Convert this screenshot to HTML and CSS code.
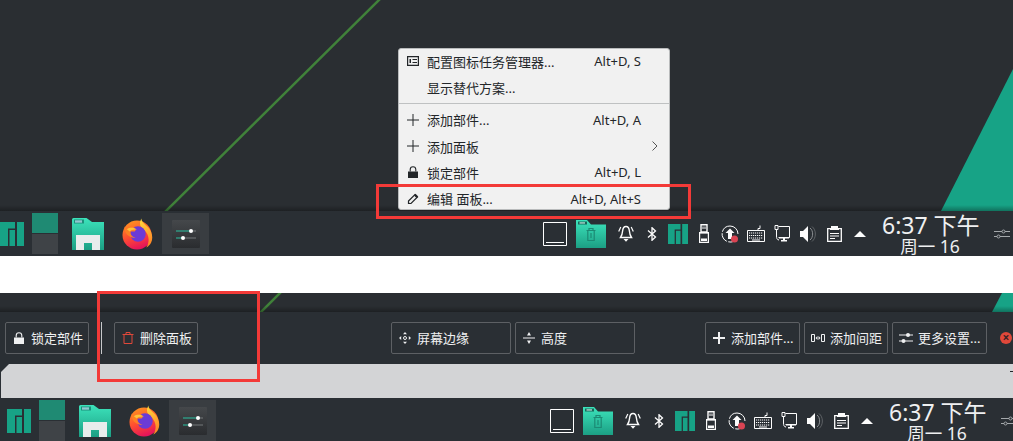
FILE: index.html
```html
<!DOCTYPE html>
<html lang="zh-CN">
<head>
<meta charset="utf-8">
<title>编辑面板</title>
<link rel="stylesheet" href="styles.css">
</head>
<body>
<svg class="sprites" aria-hidden="true">
  <defs>
    <linearGradient id="g-folder" x1="0" y1="0" x2="0" y2="1"><stop offset="0" stop-color="#3ce3bb"/><stop offset="1" stop-color="#1c9f84"/></linearGradient>
    <linearGradient id="g-fox" x1="0.1" y1="0" x2="0.45" y2="1"><stop offset="0" stop-color="#ff9a1f"/><stop offset=".55" stop-color="#ff4f30"/><stop offset="1" stop-color="#e6145a"/></linearGradient>
    <linearGradient id="g-flame" x1="0.2" y1="0" x2="0.5" y2="1"><stop offset="0" stop-color="#ffd83c"/><stop offset="1" stop-color="#ff8424"/></linearGradient>
    <linearGradient id="g-tile" x1="0" y1="0" x2="0" y2="1"><stop offset="0" stop-color="#45484b"/><stop offset="1" stop-color="#2a2c2f"/></linearGradient>
    <symbol id="i-manjaro" viewBox="0 0 24 24"><path d="M0 0H15V6.500H8V24H0Z M9.500 8H15V24H9.500Z M17 0H24V24H17Z"/></symbol>
    <symbol id="i-folder" viewBox="0 0 32 32">
      <path fill="url(#g-folder)" d="M0 1.500Q0 0 1.500 0H14.500L20 4H32V32H0Z"/>
      <path fill="#1d8f7b" d="M2 1.500H12V5.500H2Z"/>
      <path fill="#8fc8d0" d="M3 2.300H10V4.700H3Z"/>
      <path fill="#e9ecec" d="M4 17H28V32H20V25H12V32H4Z"/>
    </symbol>
    <symbol id="i-trashfolder" viewBox="0 0 30 28">
      <path fill="url(#g-folder)" d="M0 0H11L15 4.500H30V28H0Z"/>
      <path fill="#17695a" d="M2 1.500H11V4.500H2Z"/><path fill="#d5f3ec" d="M3.500 2.400H9V3.500H3.500Z"/>
      <path fill="none" stroke="#1c8a74" stroke-width="1.200" d="M10.500 10.500H19.500M13 10.500V8.500H17V10.500M11.800 10.500V20.500H18.200V10.500M15 13V18"/>
    </symbol>
    <symbol id="i-firefox" viewBox="0 0 32 32">
      <circle cx="15.500" cy="17" r="15" fill="url(#g-fox)"/>
      <path fill="url(#g-flame)" d="M20 0C20 4 24 6 27 9C31 13 32.500 20 30 25C29 27 27 29 25 30C29 24 28 16 23 12C19 9 17 6 20 0Z"/>
      <circle cx="16.500" cy="16" r="8" fill="#6b3bd6"/>
      <path fill="#ff7f24" d="M2 5C2 8 3 10 5 11C7 9 10 8 12 9C14 10 15 12 13 13.500H8.500C8.500 16 10 19 14 20C8 20 3.500 16 3 12Z"/>
      <path fill="#ffc23a" d="M5 11C8 9 12 9 15.500 11.500C12 11 9 12 8 13.500Z"/>
    </symbol>
    <symbol id="i-sliders-app" viewBox="0 0 28 28">
      <rect width="28" height="28" rx="1" fill="url(#g-tile)"/>
      <path stroke="#2bbf9f" stroke-width="1.200" d="M4 11H19M4 18H11"/>
      <path stroke="#75787b" stroke-width="1.200" d="M19 11H24M11 18H24"/>
      <circle cx="19" cy="11" r="2" fill="#fff"/><circle cx="11" cy="18" r="2" fill="#fff"/>
    </symbol>
    <symbol id="i-desktop" viewBox="0 0 24 24"><path fill="none" stroke="currentColor" d="M.500.500H23.500V23.500H.500Z"/><path stroke="currentColor" d="M3 20.500H21"/></symbol>
    <symbol id="i-bell" viewBox="0 0 16 17">
      <path fill="none" stroke="currentColor" stroke-width="1.400" d="M8 1.500C5.500 1.500 4.800 3.500 4.600 6C4.400 9 3.500 11 2.500 12.500H13.500C12.500 11 11.600 9 11.400 6C11.200 3.500 10.500 1.500 8 1.500Z"/>
      <path fill="currentColor" d="M5.500 14H10.500L8 16.800Z"/>
      <path fill="none" stroke="currentColor" stroke-width="1.200" d="M2.800 2L.7 6.500M13.200 2L15.300 6.500"/>
    </symbol>
    <symbol id="i-bt" viewBox="0 0 10 14"><path fill="none" stroke="currentColor" stroke-width="1.300" d="M1 3.500L8.500 10L5 13.300V.700L8.500 4L1 10.500"/></symbol>
    <symbol id="i-usb" viewBox="0 0 10 19">
      <path fill="none" stroke="currentColor" stroke-width="1.400" d="M2 .700H8V8H2Z"/>
      <path fill="currentColor" d="M3.500 2.500H4.500V5H3.500ZM5.500 2.500H6.500V5H5.500ZM1 8H9V9.500H1Z"/>
      <path fill="none" stroke="currentColor" stroke-width="1.200" d="M.600 8.600H9.400V18.400H.600Z"/>
      <path fill="currentColor" d="M2 14.500H8V17H2Z"/>
    </symbol>
    <symbol id="i-update" viewBox="0 0 18 18">
      <path fill="none" stroke="currentColor" stroke-dasharray="10 1.500" d="M9 1A8 8 0 1 0 16 13"/>
      <path fill="none" stroke="currentColor" d="M9 1A8 8 0 0 1 17 9"/>
      <path fill="currentColor" d="M9 3.500L13.500 8H11V14H7V8H4.500Z"/>
      <circle cx="13.500" cy="14" r="3.500" fill="#da4453"/>
    </symbol>
    <symbol id="i-keyboard" viewBox="0 0 18 17">
      <path fill="none" stroke="currentColor" d="M.500 5.500H17.500V16.500H.500Z M11 5.500V3.500H13V.500"/>
      <path stroke="currentColor" stroke-dasharray="1.200 .8" d="M2 8H16M2 10.500H16M2 13H16"/>
      <path stroke="currentColor" d="M5 15H13"/>
    </symbol>
    <symbol id="i-network" viewBox="0 0 16 17">
      <path fill="none" stroke="currentColor" d="M1 .500H4V4.500H1Z M4.500 1.500H15.500V12.500H4.500 M2.500 4.500V11C2.500 13 3 15 5 15"/>
      <path fill="currentColor" d="M5 12H15V13.500H5ZM7 15H13V16.500H7ZM9 13H11V15H9Z"/>
    </symbol>
    <symbol id="i-speaker" viewBox="0 0 16 16">
      <path fill="currentColor" d="M0 5H3L8 0V16L3 11H0Z"/>
      <path fill="none" stroke="#8a8e91" d="M10 2C13.500 4.500 13.500 11.500 10 14"/>
      <path fill="none" stroke="#5e6265" d="M12 .5C16.500 4 16.500 12 12 15.500"/>
    </symbol>
    <symbol id="i-clipboard" viewBox="0 0 15 16">
      <path fill="none" stroke="currentColor" stroke-width="1.300" d="M.700 2.600H14.300V15.300H.700Z"/>
      <path fill="currentColor" d="M4 0H11V4H4ZM3 2H12V4H3Z"/>
      <path stroke="currentColor" d="M3 7.500H12M3 10H12M3 12.500H8"/>
    </symbol>
    <symbol id="i-up" viewBox="0 0 12 6"><path fill="currentColor" d="M6 0L12 6H0Z"/></symbol>
    <symbol id="i-sliders" viewBox="0 0 16 12">
      <path fill="none" stroke="currentColor" d="M0 3.500H8M11 3.500H16M0 8.500H3M6 8.500H16"/>
      <circle cx="9.500" cy="3.500" r="1.500" fill="none" stroke="currentColor"/><circle cx="4.500" cy="8.500" r="1.500" fill="none" stroke="currentColor"/>
    </symbol>
    <symbol id="i-sliders-solid" viewBox="0 0 14 12">
      <path stroke="currentColor" d="M0 3H14M0 9H14"/>
      <circle cx="9" cy="3" r="2" fill="currentColor"/><circle cx="4.500" cy="9" r="2" fill="currentColor"/>
    </symbol>
    <symbol id="i-lock" viewBox="0 0 10 12"><path fill="currentColor" d="M0 5.500H10V12H0Z"/><path fill="none" stroke="currentColor" stroke-width="1.100" d="M2.200 5.500V3.500A2.800 2.800 0 0 1 7.800 3.500V5.500"/></symbol>
    <symbol id="i-trash" viewBox="0 0 12 12"><path fill="none" stroke="currentColor" d="M.500 2.500H11.500M4 2.500V.500H8V2.500M2 2.500V11.500H10V2.500"/></symbol>
    <symbol id="i-edges" viewBox="0 0 12 12">
      <path fill="currentColor" d="M6 0L8 2.200H4ZM6 12L4 9.800H8ZM0 6L2.200 4V8ZM12 6L9.800 8V4Z"/>
      <circle cx="6" cy="6" r="1.500" fill="none" stroke="currentColor"/>
    </symbol>
    <symbol id="i-height" viewBox="0 0 12 12"><path fill="currentColor" d="M0 5.500H12V6.500H0ZM6 0L8 3.500H4ZM6 12L4 8.500H8Z"/></symbol>
    <symbol id="i-plus" viewBox="0 0 12 12"><path fill="currentColor" d="M5 0H7V5H12V7H7V12H5V7H0V5H5Z"/></symbol>
    <symbol id="i-spacer" viewBox="0 0 14 8"><path fill="none" stroke="currentColor" d="M.500.500H3.500V7.500H.500ZM10.500.500H13.500V7.500H10.500Z"/><path fill="currentColor" d="M4.500 4L6.500 2V6ZM9.500 4L7.500 6V2Z"/></symbol>
    <symbol id="i-plus-thin" viewBox="0 0 12 12"><path stroke="currentColor" d="M6 0V12M0 6H12"/></symbol>
    <symbol id="i-configure" viewBox="0 0 12 10"><path fill="none" stroke="currentColor" stroke-width="1.200" d="M.600.600H11.400V9.400H.600Z"/><path fill="currentColor" d="M2.500 3H4V7H2.500ZM5.500 3H10V4H5.500ZM5.500 6H10V7H5.500Z"/></symbol>
    <symbol id="i-pencil" viewBox="0 0 12 12"><path fill="none" stroke="currentColor" stroke-width="1.200" d="M1.500 8L8 1.500L10.500 4L4 10.500H1.500Z"/><path fill="currentColor" d="M7 2.500L8.500 .800L11.200 3.500L9.500 5ZM1 11V8.500L3.500 11Z"/></symbol>
    <symbol id="i-chevron" viewBox="0 0 6 10"><path fill="none" stroke="currentColor" d="M.500.500L5 5L.500 9.500"/></symbol>
  </defs>
</svg>

<section class="screen screen--first">
  <div class="desktop desktop--tall">
    <svg class="wallpaper" viewBox="0 0 1013 211" aria-hidden="true">
      <path d="M381 -2L164 213" stroke="#40823a" stroke-width="2.500" fill="none"/>
      <path d="M941 211L1013 69V211Z" fill="#17a386"/>
    </svg>
  </div>
  <div class="panel panel--tall">
    <div class="panel-inner">
      <svg class="launcher"><use href="#i-manjaro"/></svg>
      <div class="pager"><span class="pager-cell pager-cell--on"></span><span class="pager-cell"></span></div>
      <svg class="app app--folder"><use href="#i-folder"/></svg>
      <svg class="app app--firefox"><use href="#i-firefox"/></svg>
      <div class="task"><svg class="task-icon"><use href="#i-sliders-app"/></svg></div>
      <div class="tray">
        <svg class="show-desktop"><use href="#i-desktop"/></svg>
        <svg class="trash-folder"><use href="#i-trashfolder"/></svg>
        <span class="slot"><svg class="t t-bell"><use href="#i-bell"/></svg></span>
        <span class="slot"><svg class="t t-bt"><use href="#i-bt"/></svg></span>
        <span class="slot"><svg class="t t-manjaro"><use href="#i-manjaro"/></svg></span>
        <span class="slot"><svg class="t t-usb"><use href="#i-usb"/></svg></span>
        <span class="slot"><svg class="t t-update"><use href="#i-update"/></svg></span>
        <span class="slot"><svg class="t t-keyboard"><use href="#i-keyboard"/></svg></span>
        <span class="slot"><svg class="t t-network"><use href="#i-network"/></svg></span>
        <span class="slot"><svg class="t t-speaker"><use href="#i-speaker"/></svg></span>
        <span class="slot"><svg class="t t-clipboard"><use href="#i-clipboard"/></svg></span>
        <span class="slot"><svg class="t t-up"><use href="#i-up"/></svg></span>
        <div class="clock"><div class="clock-time">6:37 下午</div><div class="clock-date">周一 16</div></div>
        <svg class="panel-settings"><use href="#i-sliders"/></svg>
      </div>
    </div>
  </div>
</section>

<section class="screen screen--second">
  <div class="desktop desktop--strip">
    <svg class="wallpaper" viewBox="0 0 1013 19" aria-hidden="true">
      <path d="M281 -1L260 20" stroke="#40823a" stroke-width="2.500" fill="none"/>
      <path d="M992 19L1002 0H1013V19Z" fill="#17a386"/>
    </svg>
  </div>
  <div class="toolbar">
    <button class="btn btn--narrow"><svg class="btn-icon btn-icon--lock"><use href="#i-lock"/></svg>锁定部件</button>
    <span class="toolbar-sep"></span>
    <button class="btn btn--narrow"><svg class="btn-icon btn-icon--trash"><use href="#i-trash"/></svg>删除面板</button>
    <div class="btn-group btn-group--center">
      <button class="btn btn--wide"><svg class="btn-icon btn-icon--small"><use href="#i-edges"/></svg>屏幕边缘</button>
      <button class="btn btn--wide"><svg class="btn-icon btn-icon--small"><use href="#i-height"/></svg>高度</button>
    </div>
    <div class="btn-group btn-group--right">
      <button class="btn btn--mid"><svg class="btn-icon btn-icon--small"><use href="#i-plus"/></svg>添加部件...</button>
      <button class="btn btn--narrow"><svg class="btn-icon btn-icon--spacer"><use href="#i-spacer"/></svg>添加间距</button>
      <button class="btn btn--mid"><svg class="btn-icon btn-icon--sliders"><use href="#i-sliders-solid"/></svg>更多设置...</button>
    </div>
    <span class="close-btn">×</span>
  </div>
  <div class="ruler"><span class="ruler-tick"></span></div>
  <div class="panel panel--short">
    <div class="panel-inner">
      <svg class="launcher"><use href="#i-manjaro"/></svg>
      <div class="pager"><span class="pager-cell pager-cell--on"></span><span class="pager-cell"></span></div>
      <svg class="app app--folder"><use href="#i-folder"/></svg>
      <svg class="app app--firefox"><use href="#i-firefox"/></svg>
      <div class="task"><svg class="task-icon"><use href="#i-sliders-app"/></svg></div>
      <div class="tray">
        <svg class="show-desktop"><use href="#i-desktop"/></svg>
        <svg class="trash-folder"><use href="#i-trashfolder"/></svg>
        <span class="slot"><svg class="t t-bell"><use href="#i-bell"/></svg></span>
        <span class="slot"><svg class="t t-bt"><use href="#i-bt"/></svg></span>
        <span class="slot"><svg class="t t-manjaro"><use href="#i-manjaro"/></svg></span>
        <span class="slot"><svg class="t t-usb"><use href="#i-usb"/></svg></span>
        <span class="slot"><svg class="t t-update"><use href="#i-update"/></svg></span>
        <span class="slot"><svg class="t t-keyboard"><use href="#i-keyboard"/></svg></span>
        <span class="slot"><svg class="t t-network"><use href="#i-network"/></svg></span>
        <span class="slot"><svg class="t t-speaker"><use href="#i-speaker"/></svg></span>
        <span class="slot"><svg class="t t-clipboard"><use href="#i-clipboard"/></svg></span>
        <span class="slot"><svg class="t t-up"><use href="#i-up"/></svg></span>
        <div class="clock"><div class="clock-time">6:37 下午</div><div class="clock-date">周一 16</div></div>
        <svg class="panel-settings"><use href="#i-sliders"/></svg>
      </div>
    </div>
  </div>
</section>

<div class="menu">
  <div class="menu-row"><span class="menu-icon"><svg class="mi mi--configure"><use href="#i-configure"/></svg></span><span class="menu-label">配置图标任务管理器...</span><span class="menu-key">Alt+D, S</span><span class="menu-end"></span></div>
  <div class="menu-row"><span class="menu-icon"></span><span class="menu-label">显示替代方案...</span><span class="menu-end"></span></div>
  <div class="menu-sep"></div>
  <div class="menu-row"><span class="menu-icon"><svg class="mi"><use href="#i-plus-thin"/></svg></span><span class="menu-label">添加部件...</span><span class="menu-key">Alt+D, A</span><span class="menu-end"></span></div>
  <div class="menu-row"><span class="menu-icon"><svg class="mi"><use href="#i-plus-thin"/></svg></span><span class="menu-label">添加面板</span><span class="menu-end"><svg class="mi-chevron"><use href="#i-chevron"/></svg></span></div>
  <div class="menu-row"><span class="menu-icon"><svg class="mi"><use href="#i-lock"/></svg></span><span class="menu-label">锁定部件</span><span class="menu-key">Alt+D, L</span><span class="menu-end"></span></div>
  <div class="menu-row"><span class="menu-icon"><svg class="mi"><use href="#i-pencil"/></svg></span><span class="menu-label">编辑 面板...</span><span class="menu-key">Alt+D, Alt+S</span><span class="menu-end"></span></div>
</div>

<div class="mark mark--menu"></div>
<div class="mark mark--delete"></div>
</body>
</html>
```

FILE: styles.css
```css
* { box-sizing: border-box; }
html, body { margin: 0; height: 441px; overflow: hidden; }
body {
  position: relative;
  background: #fff;
  font-family: "Noto Sans", "Noto Sans CJK SC", sans-serif;
  font-size: 13px;
}
.sprites { position: absolute; width: 0; height: 0; }

.screen { display: flex; flex-direction: column; }
.screen--second { margin-top: 37px; }

.desktop { position: relative; overflow: hidden; background: #2a2e32; }
.desktop::after {
  content: "";
  position: absolute;
  left: 0; right: 0; bottom: 0;
  height: 6px;
  background: linear-gradient(180deg, rgba(0,0,0,0), rgba(0,0,0,.3));
}
.desktop--tall { height: 211px; }
.desktop--strip { height: 19px; }
.wallpaper { position: absolute; inset: 0; width: 100%; height: 100%; display: block; }

/* Panel */
.panel { background: #2a2f34; padding-top: 2px; color: #fcfcfc; }
.panel--tall { height: 45px; }
.panel--short { height: 43px; }
.panel-inner { display: flex; align-items: center; width: 1013px; height: 41px; flex: none; }
.panel--short .panel-inner { margin-left: 7px; }
.launcher { width: 24px; height: 24px; flex: none; fill: #17a386; margin-right: 8px; }
.pager { width: 26px; height: 41px; display: flex; flex-direction: column; gap: 1px; flex: none; margin-right: 14px; }
.pager-cell { flex: 1; background: #3f4347; }
.pager-cell--on { background: #1f8a73; }
.app { flex: none; height: 32px; }
.app--folder { width: 32px; margin-right: 18px; }
.app--firefox { width: 31px; margin-right: 9px; }
.task { width: 47px; height: 41px; background: #393d41; display: flex; align-items: center; justify-content: center; flex: none; }
.task-icon { width: 28px; height: 28px; }

.tray { margin-left: auto; display: flex; align-items: center; padding-right: 3px; }
.show-desktop { width: 24px; height: 24px; margin-right: 9px; color: #fff; flex: none; }
.trash-folder { width: 30px; height: 28px; margin-right: 7px; flex: none; }
.slot { width: 26px; height: 24px; display: flex; align-items: center; justify-content: center; flex: none; }
.t { display: block; color: #fcfcfc; fill: #fcfcfc; }
.t-bell { width: 16px; height: 17px; }
.t-bt { width: 10px; height: 14px; }
.t-manjaro { width: 20px; height: 20px; fill: #17a386; }
.t-usb { width: 10px; height: 19px; }
.t-update { width: 18px; height: 18px; }
.t-keyboard { width: 18px; height: 17px; }
.t-network { width: 16px; height: 17px; }
.t-speaker { width: 16px; height: 16px; }
.t-clipboard { width: 15px; height: 16px; }
.t-up { width: 12px; height: 6px; }

.clock { width: 96px; margin-left: 9px; text-align: center; color: #eff0f1; white-space: nowrap; flex: none; }
.clock-time { font-size: 23px; line-height: 25px; }
.clock-date { font-size: 17.500px; line-height: 17px; }
.panel-settings { width: 16px; height: 12px; margin-left: 16px; color: #a4a8ab; flex: none; }

/* Edit toolbar */
.toolbar {
  height: 52px;
  background: #2a2f34;
  display: flex;
  align-items: center;
  padding-left: 5px;
  color: #eff0f1;
}
.toolbar-sep { width: 1px; height: 32px; background: #c7c9cb; margin: 0 12px; flex: none; }
.btn {
  height: 32px;
  padding: 0 0 2px 5px;
  border: 1px solid #5d6064;
  border-radius: 2px;
  background: transparent;
  color: inherit;
  font: inherit;
  display: flex;
  align-items: center;
  white-space: nowrap;
  flex: none;
}
.btn--narrow { width: 84px; }
.btn--mid { width: 95px; }
.btn--wide { width: 120px; }
.btn-group { display: flex; gap: 4px; }
.btn-group--center { margin-left: 193px; }
.btn-group--right { margin-left: 70px; }
.btn-icon { width: 14px; height: 12px; margin: 2px 5px 0 1px; flex: none; color: #eff0f1; }
.btn-icon--lock { width: 10px; margin: 2px 7px 0 3px; }
.btn-icon--trash { width: 12px; margin: 2px 6px 0 2px; color: #e0483a; }
.btn-icon--small { width: 12px; margin: 2px 6px 0 2px; }
.btn-icon--spacer { height: 8px; }
.close-btn {
  width: 12px;
  height: 12px;
  margin-left: 13px;
  border-radius: 50%;
  background: #e0483a;
  color: #3a2326;
  font-size: 12px;
  line-height: 12px;
  text-align: center;
  font-weight: 700;
  flex: none;
}

/* Ruler */
.ruler { position: relative; height: 34px; background: #d3d4d6; border-left: 1px solid #2a2f34; }
.ruler::before {
  content: "";
  position: absolute;
  left: 0; top: 0;
  border-style: solid;
  border-width: 8px 8px 0 0;
  border-color: #2a2f34 transparent transparent transparent;
}
.ruler-tick { position: absolute; right: 0; top: 7px; width: 3px; height: 1px; background: #232629; }

/* Context menu */
.menu {
  position: absolute;
  left: 398px;
  top: 48px;
  width: 272px;
  height: 162px;
  background: #f1f1f1;
  border: 1px solid #b9bbbc;
  border-radius: 3px;
  color: #232629;
}
.menu-row { height: 26.300px; padding-bottom: 2px; display: flex; align-items: center; }
.menu-icon { width: 28px; padding-left: 8px; display: flex; align-items: center; flex: none; }
.mi { width: 12px; height: 12px; color: #232629; fill: #232629; display: block; }
.mi--configure { height: 10px; }
.menu-label { flex: 1; }
.menu-key { color: #232629; }
.menu-end { width: 28px; display: flex; justify-content: center; flex: none; }
.mi-chevron { width: 6px; height: 10px; color: #555; }
.menu-sep { height: 1px; background: #bfc1c2; margin: 1px 0 4px; }

/* Red annotation boxes */
.mark { position: absolute; border: 3px solid #f33a38; pointer-events: none; }
.mark--menu { left: 376px; top: 184px; width: 315px; height: 35px; }
.mark--delete { left: 97px; top: 291px; width: 163px; height: 91px; }
```
